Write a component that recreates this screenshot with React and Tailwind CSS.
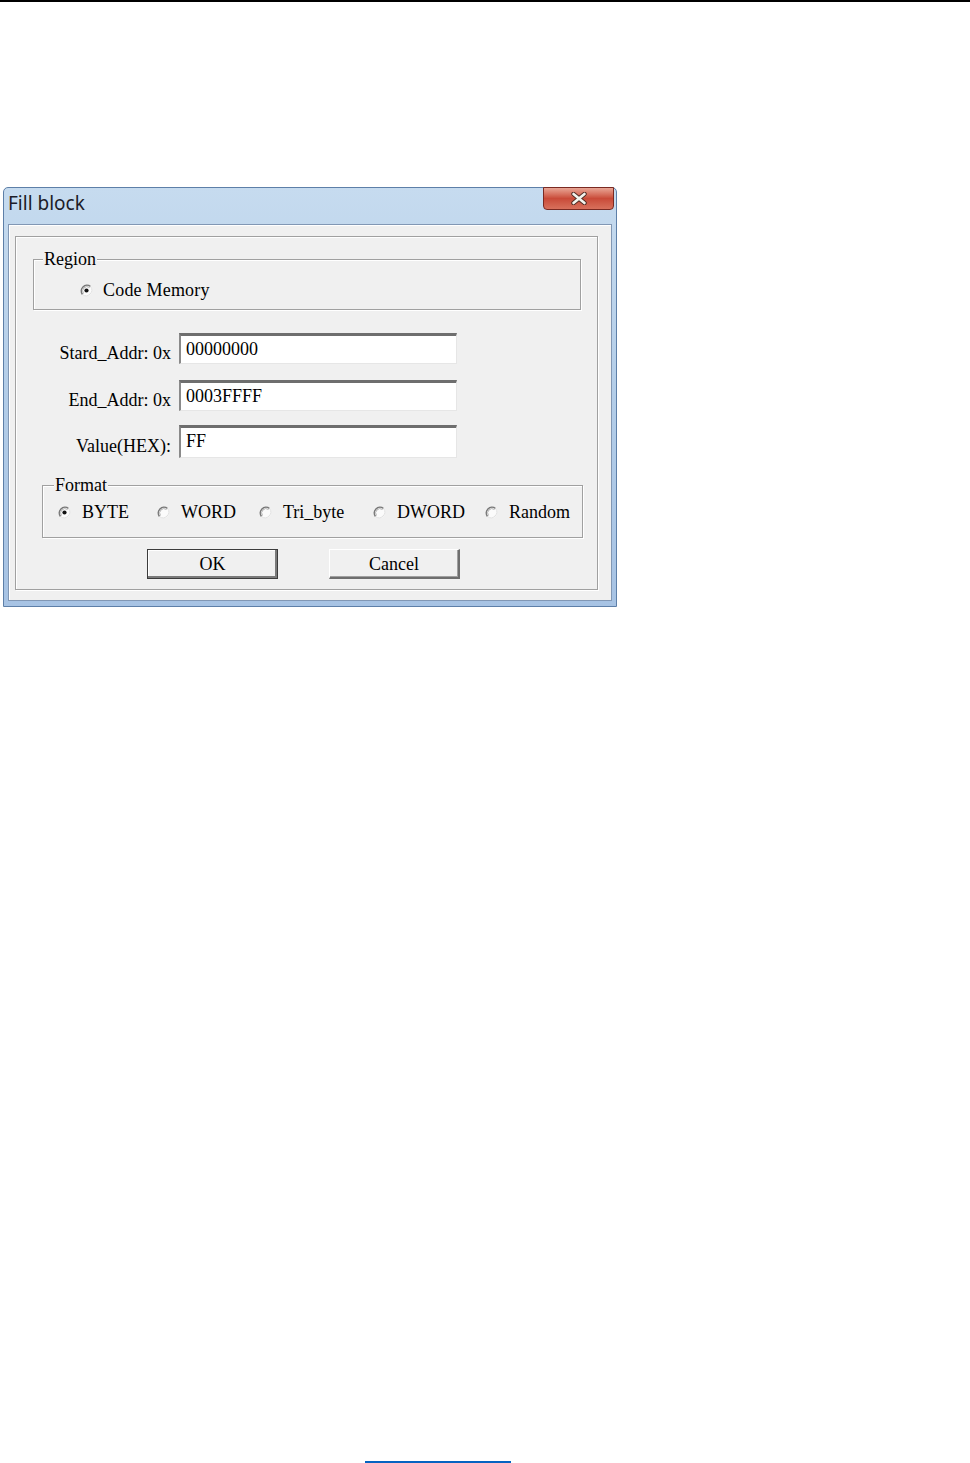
import React from "react";

const serif = { fontFamily: '"Liberation Serif", "Times New Roman", serif' };

function Radio({ checked = false }) {
  return (
    <svg width="13" height="13" viewBox="0 0 13 13" className="shrink-0">
      <circle cx="6.5" cy="6.5" r="5.6" fill="#fbfbfb" />
      <path d="M2.5 10.5 A5.7 5.7 0 0 1 10.5 2.5" fill="none" stroke="#777777" strokeWidth="1.5" />
      <path d="M3.5 9.5 A4.3 4.3 0 0 1 9.5 3.5" fill="none" stroke="#b4b4b4" strokeWidth="1" />
      <path d="M10.5 2.5 A5.7 5.7 0 0 1 2.5 10.5" fill="none" stroke="#e2e2e2" strokeWidth="1" />
      {checked && <circle cx="6.5" cy="6.5" r="2.1" fill="#111" />}
    </svg>
  );
}

function GroupBox({ label, labelLeft, className, children }) {
  return (
    <div
      className={`relative border border-[#a0a0a0] shadow-[inset_1px_1px_0_#ffffff,1px_1px_0_#ffffff] ${className}`}
    >
      <span
        className={`absolute top-[-11px] ${labelLeft} bg-[#f0f0f0] px-[1px] text-[18px] leading-[20px] text-black`}
        style={serif}
      >
        {label}
      </span>
      {children}
    </div>
  );
}

function Field({ label, value, mt, h }) {
  return (
    <div className={`flex items-center ${mt}`}>
      <div className="w-[155px] pt-[8px] text-right text-[18px] leading-[20px] text-black" style={serif}>
        {label}
      </div>
      <div
        className={`ml-[8px] w-[278px] ${h} bg-white border-t-[3px] border-l-[2px] border-b border-r border-t-[#6e6e6e] border-l-[#8a8a8a] border-b-[#e6e6e6] border-r-[#e6e6e6] pl-[5px] pt-[3px] text-[18px] leading-[20px] text-black`}
        style={serif}
      >
        {value}
      </div>
    </div>
  );
}

const FORMATS = [
  { label: "BYTE", w: "w-[99px]", checked: true },
  { label: "WORD", w: "w-[102px]" },
  { label: "Tri_byte", w: "w-[114px]" },
  { label: "DWORD", w: "w-[112px]" },
  { label: "Random", w: "w-[90px]" },
];

export default function App() {
  return (
    <div className="flex h-[1463px] w-[970px] flex-col bg-white">
      <div className="h-[2px] bg-black" />

      <div className="relative ml-[3px] mt-[185px] flex h-[420px] w-[614px] flex-col rounded-t-[5px] border border-[#5d7fa8] bg-gradient-to-b from-[#c6dbef] via-[#b3cde8] to-[#a7c3e4] px-[4px] pb-[5px]">
        <div
          className="flex h-[36px] items-center pb-[5px] text-[19px] text-[#1c1c28]"
          style={{ fontFamily: '"Noto Sans", "Open Sans", sans-serif' }}
        >
          Fill block
        </div>

        <div className="absolute right-[2px] top-[-1px] flex h-[23px] w-[71px] items-center justify-center rounded-b-[4px] border border-[#7a2a22] bg-gradient-to-b from-[#e8a595] via-[#c94a38] to-[#d8705c]">
          <svg width="18" height="13" viewBox="0 0 18 13">
            <path d="M3.5 2 L14.5 11 M14.5 2 L3.5 11" stroke="#4e2a22" strokeWidth="4.4" strokeLinecap="round" />
            <path d="M3.5 2 L14.5 11 M14.5 2 L3.5 11" stroke="#f2f4ee" strokeWidth="2.6" strokeLinecap="round" />
          </svg>
        </div>

        <div className="flex-1 border border-[#8197b4] bg-[#f0f0f0] shadow-[inset_1px_1px_0_#ffffff]">
          <div className="ml-[6px] mt-[11px] h-[354px] w-[583px] border border-[#a0a0a0] shadow-[inset_1px_1px_0_#ffffff,1px_1px_0_#ffffff]">
            <GroupBox label="Region" labelLeft="left-[9px]" className="ml-[17px] mt-[22px] h-[51px] w-[548px]">
              <div className="mt-[20px] flex h-[20px] items-center pl-[46px]">
                <Radio checked />
                <span className="ml-[10px] text-[18px] leading-[20px] tracking-[0.2px] text-black" style={serif}>
                  Code Memory
                </span>
              </div>
            </GroupBox>

            <Field label="Stard_Addr: 0x" value="00000000" mt="mt-[23px]" h="h-[31px]" />
            <Field label="End_Addr: 0x" value="0003FFFF" mt="mt-[16px]" h="h-[31px]" />
            <Field label="Value(HEX):" value="FF" mt="mt-[14px]" h="h-[33px]" />

            <GroupBox label="Format" labelLeft="left-[11px]" className="ml-[26px] mt-[27px] h-[53px] w-[541px]">
              <div className="mt-[16px] flex h-[20px] items-center pl-[15px]">
                {FORMATS.map((f) => (
                  <div key={f.label} className={`flex items-center ${f.w}`}>
                    <Radio checked={f.checked} />
                    <span className="ml-[11px] text-[18px] leading-[20px] text-black" style={serif}>
                      {f.label}
                    </span>
                  </div>
                ))}
              </div>
            </GroupBox>

            <div className="ml-[131px] mt-[11px] flex gap-[51px]">
              <div
                className="flex h-[30px] w-[131px] items-center justify-center border border-[#3c3c3c] bg-[#f0f0f0] shadow-[inset_-2px_-2px_0_#7a7a7a,inset_1px_1px_0_#ffffff] text-[18px] text-black"
                style={serif}
              >
                OK
              </div>
              <div
                className="flex h-[30px] w-[131px] items-center justify-center border-t border-l border-r-[2px] border-b-[2px] border-t-[#ffffff] border-l-[#ffffff] border-r-[#6e6e6e] border-b-[#6e6e6e] bg-[#f0f0f0] pt-[2px] shadow-[inset_-1px_-1px_0_#a0a0a0] text-[18px] text-black"
                style={serif}
              >
                Cancel
              </div>
            </div>
          </div>
        </div>
      </div>

      <div className="ml-[365px] mt-auto h-[2px] w-[146px] bg-[#0563c1]" />
    </div>
  );
}
